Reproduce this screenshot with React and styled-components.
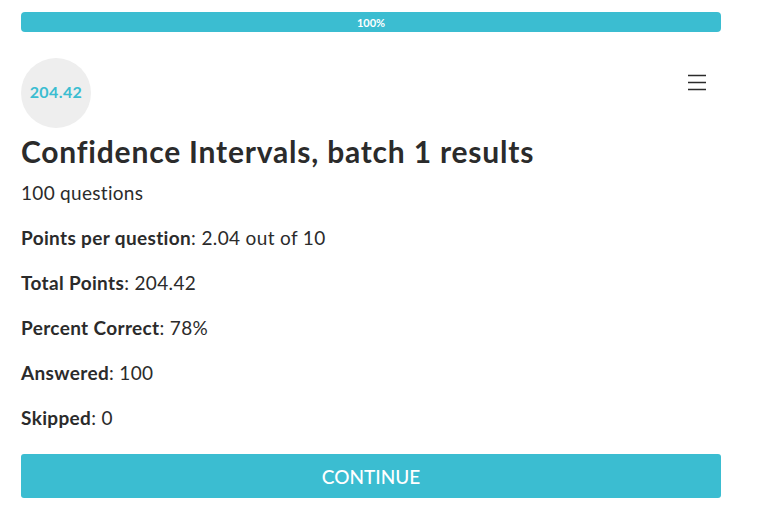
import React from 'react'
import styled, { createGlobalStyle } from 'styled-components'

const GlobalStyle = createGlobalStyle`
    body{
        margin: 0;
        background: #FFFFFF;
        font-family: Lato, "Open Sans", sans-serif;
        color: #2B2B2B;
    }
`;

const stats = [
    { label: 'Points per question', value: '2.04 out of 10' },
    { label: 'Total Points', value: '204.42' },
    { label: 'Percent Correct', value: '78%' },
    { label: 'Answered', value: '100' },
    { label: 'Skipped', value: '0' },
];

function App() {
    return (
        <PageStyled>
            <GlobalStyle />
            <Progress>
                <ProgressFill style={{ width: '100%' }}>100%</ProgressFill>
            </Progress>
            <Header>
                <ScoreBubble>204.42</ScoreBubble>
                <MenuButton aria-label="menu">
                    <svg width="18" height="17" viewBox="0 0 18 17">
                        <path d="M0 1.5h18M0 8.5h18M0 15.5h18" stroke="#2B2B2B" strokeWidth="1.6" />
                    </svg>
                </MenuButton>
            </Header>
            <Title>Confidence Intervals, batch 1 results</Title>
            <Subtitle>100 questions</Subtitle>
            <StatList>
                {stats.map((s) => (
                    <StatRow key={s.label}>
                        <strong>{s.label}</strong>: {s.value}
                    </StatRow>
                ))}
            </StatList>
            <ContinueButton>CONTINUE</ContinueButton>
        </PageStyled>
    )
}

const PageStyled = styled.div`
    width: 700px;
    padding: 12px 0 0 21px;
    display: flex;
    flex-direction: column;
`;

const Progress = styled.div`
    height: 20px;
    background: #E8E8E8;
    border-radius: 4px;
    overflow: hidden;
`;

const ProgressFill = styled.div`
    height: 100%;
    background: #3BBDD1;
    color: #FFFFFF;
    font-size: 11px;
    font-weight: 700;
    display: flex;
    align-items: center;
    justify-content: center;
`;

const Header = styled.div`
    margin-top: 26px;
    display: flex;
    justify-content: space-between;
    align-items: flex-start;
`;

const ScoreBubble = styled.div`
    width: 70px;
    height: 70px;
    border-radius: 50%;
    background: #EEEEEE;
    color: #3BBDD1;
    font-size: 16px;
    letter-spacing: 0.4px;
    font-weight: 700;
    display: flex;
    align-items: center;
    justify-content: center;
    padding-bottom: 4px;
    box-sizing: border-box;
`;

const MenuButton = styled.button`
    margin: 16px 15px 0 0;
    padding: 0;
    border: none;
    background: none;
    display: flex;
`;

const Title = styled.h1`
    margin: 6px 0 0;
    font-size: 30px;
    line-height: 35px;
    letter-spacing: 0.8px;
    font-weight: 700;
    color: #2B2B2B;
`;

const Subtitle = styled.p`
    margin: 13px 0 0;
    font-size: 19px;
    line-height: 22px;
    letter-spacing: 0.3px;
`;

const StatList = styled.div`
    display: flex;
    flex-direction: column;
    gap: 23px;
    margin-top: 23px;
`;

const StatRow = styled.p`
    margin: 0;
    font-size: 19px;
    line-height: 22px;
    letter-spacing: 0.35px;
    strong{
        font-weight: 700;
    }
`;

const ContinueButton = styled.button`
    margin-top: 25px;
    height: 44px;
    border: none;
    border-radius: 3px;
    background: #3BBDD1;
    color: #FFFFFF;
    font-family: inherit;
    font-size: 19px;
    font-weight: 500;
    cursor: pointer;
`;

export default App;
